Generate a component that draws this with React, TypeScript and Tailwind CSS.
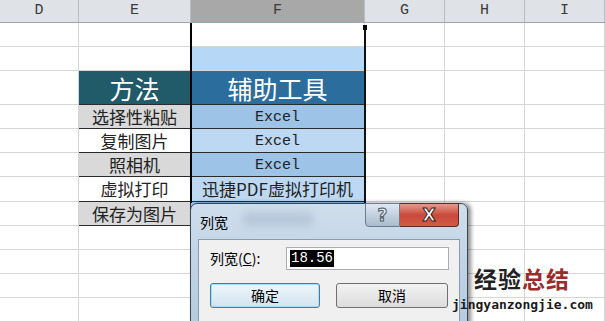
import React from "react";

const COLS = [79, 112, 174, 80, 80, 80];
const ROWS = [24, 24, 34, 24, 24, 24, 25, 24, 24, 24, 24, 24];
const LETTERS = ["D", "E", "F", "G", "H", "I"];

type CellSpec = { bg?: string; text?: string; big?: boolean; mono?: boolean };

function spec(r: number, c: number): CellSpec | null {
  if (c === 2 && r === 1) return { bg: "bg-[#b7d7f7]" };
  if (r === 2 && c === 1) return { bg: "bg-[#215a69]", text: "方法", big: true };
  if (r === 2 && c === 2) return { bg: "bg-[#2b6d9c]", text: "辅助工具", big: true };
  const eTexts = ["选择性粘贴", "复制图片", "照相机", "虚拟打印", "保存为图片"];
  const fTexts = ["Excel", "Excel", "Excel", "迅捷PDF虚拟打印机", ""];
  if (r >= 3 && r <= 7) {
    const i = r - 3;
    if (c === 1) return { bg: i % 2 === 0 ? "bg-[#d9d9d9]" : "bg-white", text: eTexts[i] };
    if (c === 2) return { bg: i % 2 === 0 ? "bg-[#9dc3e6]" : "bg-[#bcd8f2]", text: fTexts[i], mono: fTexts[i] === "Excel" };
  }
  return null;
}

export default function App() {
  return (
    <div className="relative w-[605px] h-[321px] overflow-hidden bg-white" style={{ fontFamily: '"Noto Sans CJK SC", sans-serif' }}>
      {/* column headers */}
      <div className="flex h-[23px] border-b border-[#9aa5b1]">
        {COLS.map((w, i) => (
          <div
            key={i}
            style={{ width: w }}
            className={`flex items-center justify-center border-r border-[#b8bec6] text-[15px] text-[#3a3a3a] ${i === 2 ? "bg-[#a8a8a8]" : "bg-[#dfe3e8]"}`}
          >
            <span style={{ fontFamily: '"Liberation Mono", monospace' }}>{LETTERS[i]}</span>
          </div>
        ))}
      </div>
      {/* grid body */}
      {ROWS.map((h, r) => (
        <div key={r} className="flex" style={{ height: h }}>
          {COLS.map((w, c) => {
            const s = spec(r, c);
            const inTable = r >= 2 && r <= 7 && (c === 1 || c === 2);
            return (
              <div
                key={c}
                style={{ width: w }}
                className={`flex items-center justify-center whitespace-nowrap ${
                  inTable ? "border-r border-b border-[#2a2a2a]" : "border-r border-b border-[#d6d6d6]"
                } ${s?.bg ?? "bg-white"}`}
              >
                {s?.text ? (
                  s.big ? (
                    <span className="text-[25px] leading-[32px] text-white">{s.text}</span>
                  ) : s.mono ? (
                    <span className="pt-[2px] text-[15px] leading-[20px] text-[#222]" style={{ fontFamily: '"Liberation Mono", monospace' }}>
                      {s.text}
                    </span>
                  ) : (
                    <span className="text-[17px] leading-[22px] text-[#222]">{s.text}</span>
                  )
                ) : null}
              </div>
            );
          })}
        </div>
      ))}

      {/* column resize indicator lines */}
      <div className="absolute left-[190px] top-[23px] w-[2px] h-[180px] bg-black" />
      <div className="absolute left-[363px] top-[25px] w-[4px] h-[5px] bg-black" />
      <div className="absolute left-[364px] top-[29px] w-[2px] h-[174px] bg-[#111]" />

      {/* dialog */}
      <div className="absolute left-[190px] top-[203px] w-[278px] h-[130px] rounded-t-[7px] border border-[#3d4650] bg-gradient-to-b from-[#cfdeec] via-[#bfd2e6] to-[#b5cadf] shadow-[3px_0_4px_rgba(0,0,0,0.45)]">
        {/* title */}
        <div className="relative h-[35px]">
          <span className="absolute left-[9px] top-[8px] text-[14px] text-black">列宽</span>
          <div className="absolute left-[52px] top-[8px] w-[70px] h-[14px] rounded bg-[#aebfd2] blur-[4px] opacity-70" />
          <div className="absolute left-[174px] top-[-1px] flex h-[24px]">
            <div className="flex w-[35px] items-center justify-center rounded-bl-[4px] border border-[#6b7c8e] bg-gradient-to-b from-[#dfe8f1] to-[#a9bbcc]">
              <span className="text-[17px] font-bold leading-none text-[#e8eef4]" style={{ WebkitTextStroke: "1px #4a5562", fontFamily: '"DejaVu Sans", sans-serif' }}>?</span>
            </div>
            <div className="flex w-[59px] items-center justify-center rounded-br-[4px] border border-l-0 border-[#5a2a2a] bg-gradient-to-b from-[#e29a8c] via-[#c9493a] to-[#cf5c45]">
              <span className="text-[17px] font-bold leading-none text-white" style={{ WebkitTextStroke: "1px #3a2020", fontFamily: '"DejaVu Sans", sans-serif' }}>X</span>
            </div>
          </div>
        </div>
        {/* client area */}
        <div className="mx-[7px] h-[90px] border border-[#8c9aab] bg-[#f0f0f0]">
          <div className="flex items-center pl-[11px] pt-[7px]">
            <span className="w-[76px] text-[14px] text-black">
              列宽(<span className="underline">C</span>):
            </span>
            <div className="flex h-[23px] w-[163px] items-center border border-[#abadb3] bg-white pl-[3px]">
              <span className="bg-black px-[1px] text-[14px] leading-[17px] text-white" style={{ fontFamily: '"Liberation Mono", monospace' }}>18.56</span>
            </div>
          </div>
          <div className="flex gap-[16px] pl-[11px] pt-[13px]">
            <div className="flex h-[25px] w-[110px] items-center justify-center rounded-[3px] border border-[#3c7fb1] bg-gradient-to-b from-[#eef6fb] to-[#d2e4f0] shadow-[inset_0_0_0_1px_#a8dcf4] text-[14px] text-black">
              确定
            </div>
            <div className="flex h-[25px] w-[112px] items-center justify-center rounded-[3px] border border-[#707070] bg-gradient-to-b from-[#f2f2f2] to-[#dcdcdc] text-[14px] text-black">
              取消
            </div>
          </div>
        </div>
      </div>

      {/* watermark */}
      <div className="absolute left-[474px] top-[267px] text-[23px] font-bold leading-none tracking-[1px]">
        <span className="text-[#222]">经验</span>
        <span className="text-[#9b2c2c]">总结</span>
      </div>
      <div className="absolute left-[452px] top-[298px] text-[13px] font-bold leading-none text-[#1a1a1a]" style={{ fontFamily: '"DejaVu Sans Mono", monospace' }}>
        jingyanzongjie.com
      </div>
    </div>
  );
}
